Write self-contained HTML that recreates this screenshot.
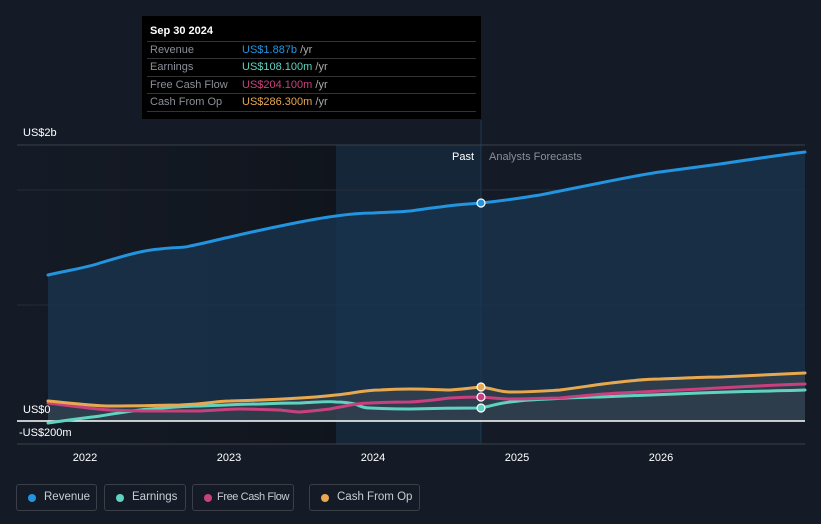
<!DOCTYPE html>
<html><head><meta charset="utf-8"><style>
body{margin:0;background:#151b26;width:821px;height:524px;overflow:hidden;font-family:"Liberation Sans",sans-serif;position:relative}
.tt{position:absolute;left:142px;top:16px;width:339px;height:103px;background:#000;font-size:11px}
.tt .h{color:#fff;font-weight:bold;position:absolute;left:8px;top:9px;font-size:11px}
.row{position:absolute;left:5px;width:329px;height:17px;border-top:1px solid #333;line-height:17px}
.row .l{position:absolute;left:3px;color:#8a8f98}
.row .v{position:absolute;left:95px;color:#aaa}
.leg{position:absolute;top:484px;height:27px;border:1px solid #3a3f48;border-radius:3px;color:#c9ccd1;font-size:11.5px;line-height:25px;box-sizing:border-box;padding-left:27px;white-space:nowrap;overflow:hidden}
.leg i{position:absolute;left:11px;top:9px;width:8px;height:8px;border-radius:50%}
</style></head><body>
<svg width="821" height="524" style="position:absolute;left:0;top:0">
<defs>
<linearGradient id="pg" x1="0" x2="1"><stop offset="0" stop-color="#151b26"/><stop offset="1" stop-color="#10151d"/></linearGradient>
</defs>
<rect x="17" y="145" width="319" height="299" fill="url(#pg)"/>
<rect x="336" y="145" width="145" height="299" fill="#14283c" opacity="0.85"/>
<line x1="481" y1="120" x2="481" y2="444" stroke="#1e3a55" stroke-width="1"/>
<line x1="17" y1="145" x2="805" y2="145" stroke="#3a404a"/>
<line x1="17" y1="190" x2="805" y2="190" stroke="#262c36"/>
<line x1="17" y1="305" x2="805" y2="305" stroke="#262c36"/>
<line x1="17" y1="444" x2="805" y2="444" stroke="#3a404a"/>
<path d="M48,275 C70,270 85,268 100,263 C130,254 145,250 160,249 C175,247 185,248 190,246 C210,242 220,239 230,237 C260,230 275,227 290,224 C310,220 320,218 336,216 C350,214 360,213 373,213 C390,212 400,212 410,211 C425,209 430,208 440,207 C460,204 470,204 481,203 C510,200 520,198 540,195 C570,189 585,186 600,183 C630,177 645,174 660,172 C690,168 705,166 720,164 C760,158 780,155 805,152 L805,421 L48,421Z" fill="#1a3550" opacity="0.75"/>
<path d="M48,401 C80,404 95,406 110,406 C150,406 160,405 180,405 C210,404 215,401 230,401 C270,400 285,399 300,398 C320,397 325,396 336,395 C355,393 365,390 380,390 C395,389 400,389 410,389 C430,389 440,390 450,390 C465,389 470,388 481,387 C495,389 500,392 510,392 C535,392 545,391 560,390 C590,386 600,384 620,382 C640,380 645,379 660,379 C690,378 700,377 720,377 C760,375 785,374 805,373 L805,421 L48,421Z" fill="#5a5a58" opacity="0.35"/>
<line x1="17" y1="421" x2="805" y2="421" stroke="#ffffff" stroke-width="1.5"/>
<g fill="none" stroke-width="3" stroke-linecap="round">
<path d="M48,275 C70,270 85,268 100,263 C130,254 145,250 160,249 C175,247 185,248 190,246 C210,242 220,239 230,237 C260,230 275,227 290,224 C310,220 320,218 336,216 C350,214 360,213 373,213 C390,212 400,212 410,211 C425,209 430,208 440,207 C460,204 470,204 481,203 C510,200 520,198 540,195 C570,189 585,186 600,183 C630,177 645,174 660,172 C690,168 705,166 720,164 C760,158 780,155 805,152" stroke="#2394df"/>
<path d="M48,423 C75,419 85,418 100,416 C125,412 135,410 150,409 C175,407 185,406 200,406 C230,405 245,404 260,404 C280,403 290,403 300,403 C320,402 330,401 336,402 C345,402 350,403 355,404 C362,407 365,408 370,408 C390,409 400,409 410,409 C445,408 465,408 481,408 C495,405 500,403 510,402 C520,401 525,400 530,400 C565,398 580,397 600,397 C650,395 675,394 700,393 C750,391 780,391 805,390" stroke="#5fd3c0"/>
<path d="M48,403 C80,407 95,409 110,410 C135,411 150,411 160,411 C180,411 190,411 200,411 C220,410 230,409 240,409 C260,409 270,410 280,410 C290,411 295,412 300,412 C315,411 320,410 330,409 C350,405 360,403 370,403 C390,402 400,402 410,402 C430,401 440,399 450,398 C465,397 472,397 481,397 C495,398 500,399 510,399 C535,399 545,398 560,398 C590,395 600,394 620,393 C660,391 680,390 700,389 C750,386 780,385 805,384" stroke="#c8417e"/>
<path d="M48,401 C80,404 95,406 110,406 C150,406 160,405 180,405 C210,404 215,401 230,401 C270,400 285,399 300,398 C320,397 325,396 336,395 C355,393 365,390 380,390 C395,389 400,389 410,389 C430,389 440,390 450,390 C465,389 470,388 481,387 C495,389 500,392 510,392 C535,392 545,391 560,390 C590,386 600,384 620,382 C640,380 645,379 660,379 C690,378 700,377 720,377 C760,375 785,374 805,373" stroke="#e8a84f"/>
</g>
<circle cx="481" cy="203" r="4" fill="#2394df" stroke="#fff" stroke-width="1.2"/>
<circle cx="481" cy="387" r="4" fill="#e8a84f" stroke="#fff" stroke-width="1.2"/>
<circle cx="481" cy="397" r="4" fill="#c8417e" stroke="#fff" stroke-width="1.2"/>
<circle cx="481" cy="408" r="4" fill="#5fd3c0" stroke="#fff" stroke-width="1.2"/>
<g font-size="11" fill="#fff" font-family="Liberation Sans, sans-serif">
<text x="23" y="136">US$2b</text>
<text x="23" y="413">US$0</text>
<text x="19" y="436">-US$200m</text>
<text x="474" y="160" text-anchor="end">Past</text>
<text x="489" y="160" fill="#8a8f98">Analysts Forecasts</text>
<g text-anchor="middle"><text x="85" y="461">2022</text><text x="229" y="461">2023</text><text x="373" y="461">2024</text><text x="517" y="461">2025</text><text x="661" y="461">2026</text></g>
</g>
</svg>
<div class="tt"><div class="h">Sep 30 2024</div>
<div class="row" style="top:25px"><span class="l">Revenue</span><span class="v"><b style="font-weight:normal;color:#2394df">US$1.887b</b> /yr</span></div>
<div class="row" style="top:42px"><span class="l">Earnings</span><span class="v"><b style="font-weight:normal;color:#5fd3c0">US$108.100m</b> /yr</span></div>
<div class="row" style="top:60px"><span class="l">Free Cash Flow</span><span class="v"><b style="font-weight:normal;color:#c8417e">US$204.100m</b> /yr</span></div>
<div class="row" style="top:77px;border-bottom:1px solid #333"><span class="l">Cash From Op</span><span class="v"><b style="font-weight:normal;color:#e8a84f">US$286.300m</b> /yr</span></div>
</div>
<div class="leg" style="left:16px;width:81px"><i style="background:#2394df"></i>Revenue</div>
<div class="leg" style="left:104px;width:82px"><i style="background:#5fd3c0"></i>Earnings</div>
<div class="leg" style="left:192px;width:102px;padding-left:24px;font-size:11px;letter-spacing:-0.4px"><i style="background:#c8417e"></i>Free Cash Flow</div>
<div class="leg" style="left:309px;width:111px"><i style="background:#e8a84f"></i>Cash From Op</div>
</body></html>
